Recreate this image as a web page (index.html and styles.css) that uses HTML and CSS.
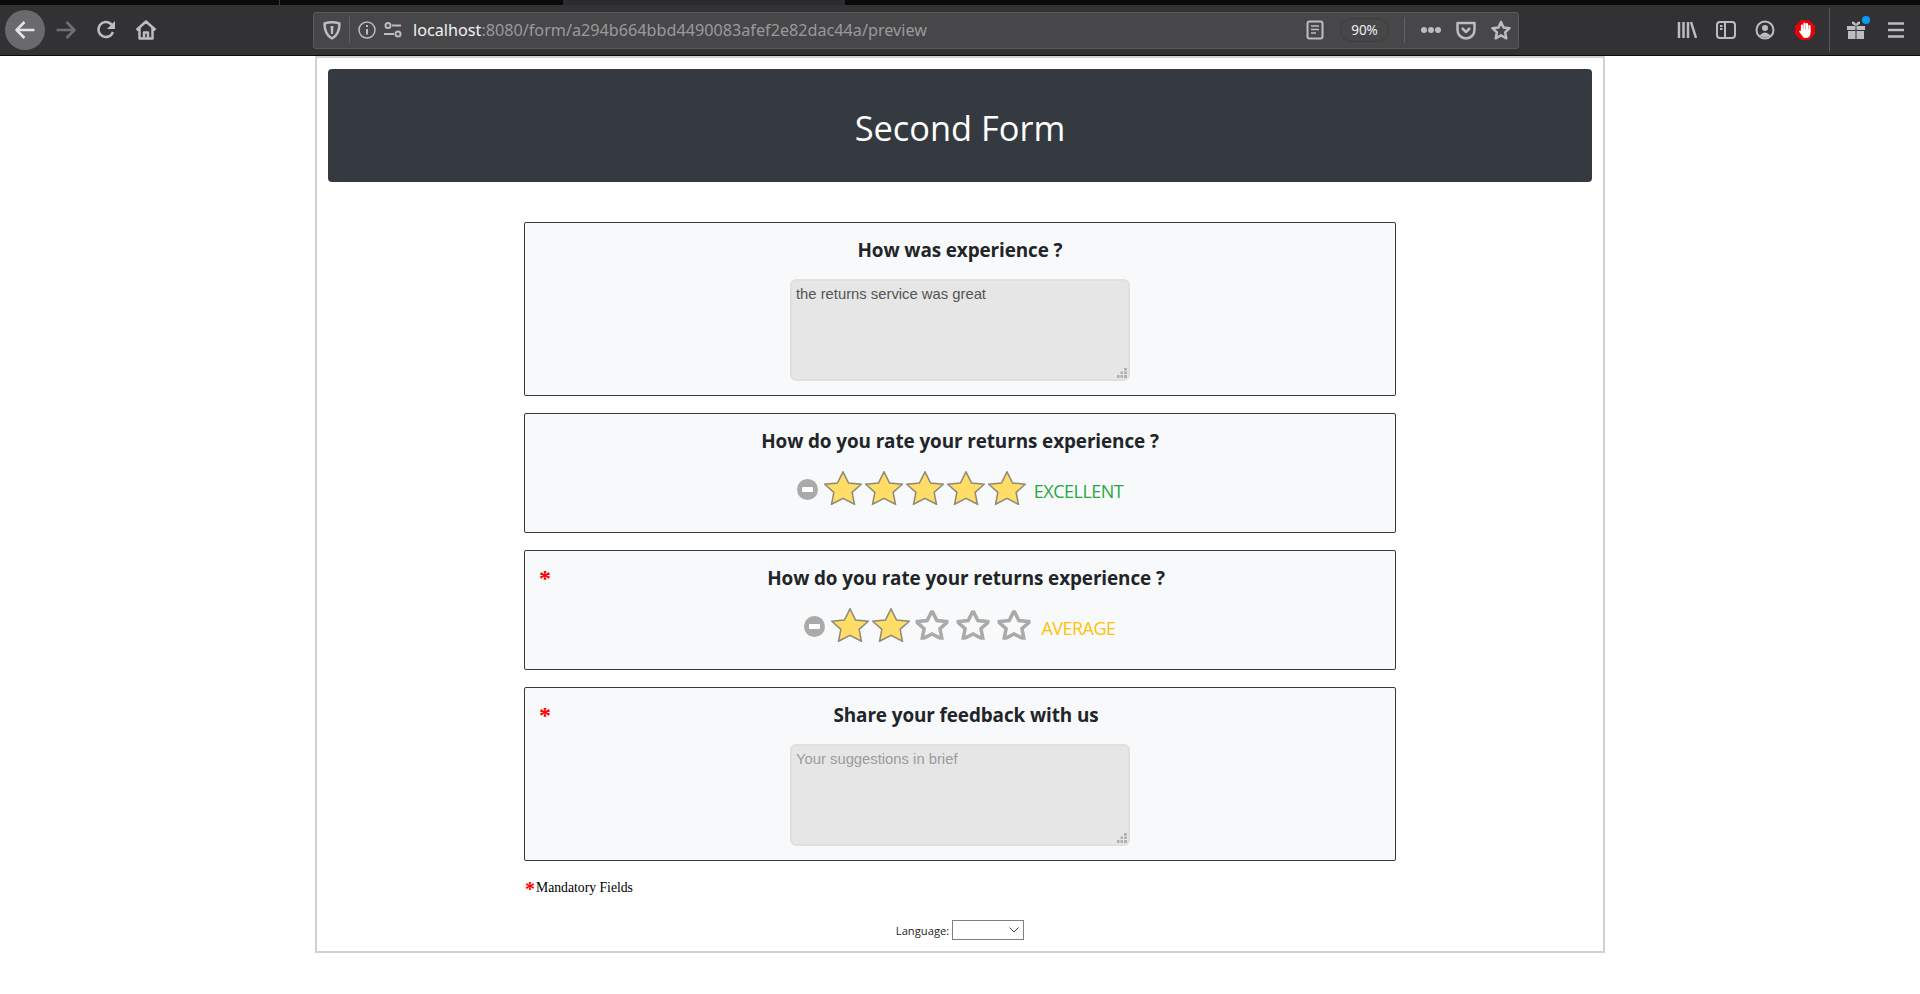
FILE: index.html
```html
<!DOCTYPE html>
<html lang="en">
<head>
<meta charset="utf-8">
<title>Second Form</title>
<link rel="stylesheet" href="styles.css">
</head>
<body>
<svg class="defs" width="0" height="0" aria-hidden="true">
  <symbol id="star" viewBox="0 0 37 33.5"><path d="M18.5.8L24 11.8 36.500 13 27.500 21 29.800 32.800 18.500 27 7.200 32.800 9.500 21 .5 13 13 11.800z"/></symbol>
  <symbol id="grip" viewBox="0 0 10 10"><path d="M7 0h3v2.500H7zM7 3.500h3V6H7zM3.500 3.500h2.500V6H3.500zM7 7h3v3H7zM3.500 7H6v3H3.500zM0 7h2.500v3H0z"/></symbol>
</svg>
<header class="browser">
  <div class="tabstrip"><span class="tab-a"></span><span class="tab-b"></span><span class="tab-c"></span></div>
  <div class="toolbar">
    <div class="nav">
      <span class="back"><svg width="22" height="22" viewBox="0 0 22 22"><path class="ln bold" d="M20.500 11H2M10.500 3L2.500 11l8 8"/></svg></span>
      <svg class="dim" width="22" height="22" viewBox="0 0 22 22"><path class="ln bold" d="M1.500 11H20M11.500 3l8 8-8 8"/></svg>
      <svg width="22" height="22" viewBox="0 0 22 22"><path class="ln bold" d="M18 13a7.500 7.500 0 1 1-2-8L18.500 7.500"/><path class="fillg" d="M20 2v8h-8z"/></svg>
      <svg width="22" height="22" viewBox="0 0 22 22"><path class="ln bold" d="M1.500 11L11 2.500l9.500 8.500M4.500 9v10.500h13V9M9 19.500v-6h4v6"/></svg>
    </div>
    <div class="urlbar">
      <svg width="18" height="20" viewBox="0 0 18 20"><path class="ln bold" d="M1.500 3.500Q9 1 16.500 3.500 16.500 14.500 9 18.500 1.500 14.500 1.500 3.500z"/><path class="fillg" d="M7.500 6h3l-.5 8H8z"/></svg>
      <span class="sep lead"></span>
      <svg class="info" width="18" height="18" viewBox="0 0 18 18"><circle class="ln thin" cx="9" cy="9" r="8"/><path class="ln" d="M9 8v5.500M9 4v2"/></svg>
      <svg width="20" height="18" viewBox="0 0 20 18"><circle class="ln" cx="5" cy="4.500" r="2.500"/><circle class="ln" cx="15" cy="13" r="2.500"/><path class="ln" d="M9 4.500h9M1 13h10"/></svg>
      <span class="url"><b>localhost</b>:8080/form/a294b664bbd4490083afef2e82dac44a/preview</span>
      <svg width="18" height="20" viewBox="0 0 18 20"><rect class="ln" x="1.500" y="1.500" width="15" height="17" rx="2"/><path class="ln thin" d="M5 6h8M5 9.500h8M5 13h5"/></svg>
      <span class="zoom">90%</span>
      <span class="sep gapped"></span>
      <span class="dots"><i></i><i></i><i></i></span>
      <svg width="20" height="20" viewBox="0 0 20 20"><path class="ln bold" d="M1.500 3h17v7a8.500 8.500 0 0 1-17 0zM6 8l4 4 4-4"/></svg>
      <svg class="fav" width="20" height="20" viewBox="0 0 20 20"><path class="ln bold" d="M10 2l2.500 5.500 6 .7-4.400 4.100 1.200 6L10 15.300l-5.300 3 1.200-6-4.400-4.100 6-.7z"/></svg>
    </div>
    <div class="tools">
      <svg width="20" height="20" viewBox="0 0 20 20"><path class="ln bold" d="M2 2v16M6.500 2v16M11 2v16M14 2l5 16"/></svg>
      <svg width="20" height="20" viewBox="0 0 20 20"><rect class="ln" x="1" y="2" width="18" height="16" rx="3"/><path class="ln" d="M9 2v16M4 6h2.500M4 9h2.500"/></svg>
      <svg width="20" height="20" viewBox="0 0 20 20"><circle class="ln" cx="10" cy="10" r="8.500"/><circle class="fillg" cx="10" cy="8" r="3"/><path class="fillg" d="M4.500 15.500Q10 9.500 15.500 15.500 10 19 4.500 15.500z"/></svg>
      <svg width="22" height="22" viewBox="0 0 22 22"><path class="abp" d="M7 1h8l6 6v8l-6 6H7l-6-6V7z"/><path class="fing" d="M8 11V6.500M10.500 11V4.500M13 11V5M15.500 12V7"/><path class="hand" d="M7 10.500h9.500V14q0 5-5 5-2.500 0-3.500-2.500L5 12.500q1-1.500 2-.5z"/></svg>
      <span class="sep full"></span>
      <span class="gift"><svg width="22" height="22" viewBox="0 0 22 22"><path class="fillg" d="M2 7h8.500v4H2zM11.500 7H20v4h-8.500zM3 12h7.500v8H3zM11.500 12H19v8h-7.500zM7 2.500q3.500 0 4 3 .5-3 4-3V5l-4 2-4-2z"/></svg><i class="dot"></i></span>
      <svg width="20" height="20" viewBox="0 0 20 20"><path class="ln bold" d="M2 3.500h16M2 10h16M2 16.500h16"/></svg>
    </div>
  </div>
</header>
<main class="frame">
  <div class="banner"><h1>Second Form</h1></div>
  <form class="questions">
    <section class="card tall">
      <h2>How was experience ?</h2>
      <div class="area filled">the returns service was great<svg class="grip" width="10" height="10"><use href="#grip"/></svg></div>
    </section>
    <section class="card">
      <h2>How do you rate your returns experience ?</h2>
      <div class="rating">
        <span class="clear"></span>
        <span class="stars">
          <svg class="on"><use href="#star"/></svg><svg class="on"><use href="#star"/></svg><svg class="on"><use href="#star"/></svg><svg class="on"><use href="#star"/></svg><svg class="on"><use href="#star"/></svg>
        </span>
        <span class="lbl good">EXCELLENT</span>
      </div>
    </section>
    <section class="card">
      <span class="req">*</span>
      <h2 class="marked">How do you rate your returns experience ?</h2>
      <div class="rating">
        <span class="clear"></span>
        <span class="stars">
          <svg class="on"><use href="#star"/></svg><svg class="on"><use href="#star"/></svg><svg class="off"><use href="#star"/></svg><svg class="off"><use href="#star"/></svg><svg class="off"><use href="#star"/></svg>
        </span>
        <span class="lbl avg">AVERAGE</span>
      </div>
    </section>
    <section class="card tall">
      <span class="req">*</span>
      <h2 class="marked">Share your feedback with us</h2>
      <div class="area hint">Your suggestions in brief<svg class="grip" width="10" height="10"><use href="#grip"/></svg></div>
    </section>
    <p class="mandatory"><span class="mark">*</span>Mandatory Fields</p>
    <div class="language">
      <span>Language:</span>
      <span class="select"><svg width="10" height="6" viewBox="0 0 10 6"><path d="M.5.500L5 5 9.500.500"/></svg></span>
    </div>
  </form>
</main>
</body>
</html>
```
FILE: styles.css
```css
* { box-sizing: border-box; }
html, body { margin: 0; padding: 0; background: #fff; }
body { height: 994px; overflow: hidden; font-family: "Open Sans", "Noto Sans", sans-serif; }
.defs { position: absolute; }

.browser { height: 56px; background: #323234; border-bottom: 1px solid #0c0c0d; }
.tabstrip { height: 5px; background: #0a0a0b; display: flex; }
.tab-a { width: 280px; border-right: 1px solid #3a3a3c; }
.tab-b { width: 283px; }
.tab-c { width: 282px; background: #2b2b2d; }
.toolbar { height: 50px; display: flex; align-items: center; padding: 0 14px 0 5px; }
.ln { fill: none; stroke: #bdbdbf; stroke-width: 2; stroke-linejoin: round; }
.ln.thin { stroke-width: 1.500; }
.ln.bold { stroke-width: 2.500; }
.fillg { fill: #bdbdbf; }
.nav { width: 308px; display: flex; align-items: center; gap: 18px; }
.nav .dim { opacity: .45; margin-left: -8px; }
.back { width: 40px; height: 40px; border-radius: 50%; background: #6a6a6c; display: flex; align-items: center; justify-content: center; }
.back .ln { stroke: #e4e4e6; }
.urlbar { width: 1206px; height: 37px; background: #474749; border: 1px solid #5a5a5c; border-radius: 3px; display: flex; align-items: center; padding: 0 7px 0 9px; gap: 7px; }
.sep { width: 1px; height: 26px; background: #5f6068; }
.sep.lead { margin-left: 1px; }
.info { margin-left: 1px; }
.sep.gapped { margin-left: 8px; }
.sep.full { height: 44px; margin: 0 -4px 0 -6px; background: #58585a; }
.url { flex: 1; font: 16.200px/1 "Noto Sans", sans-serif; color: #9a9a9c; margin-left: 3px; }
.url b { font-weight: 400; color: #f2f2f2; }
.zoom { width: 49px; height: 24px; margin-left: 9px; border: 1px solid #3c3c3e; border-radius: 12px; color: #f0f0f0; font: 13.500px/22px "Noto Sans", sans-serif; text-align: center; }
.dots { display: flex; gap: 1px; margin: 0 8px 0 9px; }
.dots i { width: 6px; height: 6px; border-radius: 50%; background: #bdbdbf; }
.fav { margin-left: 8px; }
.tools { flex: 1; display: flex; align-items: center; justify-content: flex-end; gap: 19px; }
.abp { fill: #e8000b; }
.hand { fill: #fff; }
.fing { fill: none; stroke: #fff; stroke-width: 2.200; stroke-linecap: round; }
.gift { position: relative; display: flex; }
.dot { position: absolute; top: -3px; right: -3px; width: 8px; height: 8px; border-radius: 50%; background: #0a9bf5; }

.frame { width: 1290px; height: 897px; margin: 0 0 0 315px; border: 2px solid #d0d0d0; padding: 11px 11px 0; }
.banner { height: 113px; background: #343a40; border-radius: 4px; display: flex; align-items: center; justify-content: center; }
h1 { margin: 0 0 -5px; font-size: 34.400px; font-weight: 400; line-height: 1.2; color: #fff; }
.questions { margin: 40px 0 0 196px; width: 872px; }
.card { position: relative; height: 120px; margin-bottom: 17px; background: #f8f9fa; border: 1px solid #343a40; border-radius: 2px; padding-top: 14px; }
.card.tall { height: 174px; }
h2 { margin: 0; font-size: 18.900px; font-weight: 700; line-height: 27px; color: #212529; text-align: center; letter-spacing: -.1px; }
h2.marked { padding-left: 12px; }
.req { position: absolute; left: 14px; top: 13px; color: #f00; font: 700 24px/1.2 "Liberation Serif", serif; }
.area { position: relative; width: 340px; height: 102px; margin: 15px auto 0; background: #e6e6e6; border: 2px solid #e0e0e0; border-radius: 6px; padding: 5px 4px; font: 14.800px/1.2 "Liberation Sans", sans-serif; color: #545454; }
.area.hint { color: #9b9b9b; }
.grip { position: absolute; right: 1px; bottom: 1px; fill: #b0b0b0; }
.rating { display: flex; align-items: center; justify-content: center; height: 48px; margin-top: 9px; }
.clear { position: relative; width: 21px; height: 21px; margin: 2px 6px 0 0; border-radius: 50%; background: #aaa; }
.clear::after { content: ""; position: absolute; left: 5px; top: 8px; width: 11px; height: 5px; border-radius: 1px; background: #fff; }
.stars { display: flex; gap: 3px; }
.stars svg { width: 38px; height: 34px; overflow: visible; }
.on { fill: #ffdd66; stroke: #8d8a7a; stroke-width: 1.500; }
.off { fill: #f8f9fa; stroke: #aaa; stroke-width: 4; }
.off use { transform: translate(2.500px, 2.200px) scale(.87); }
.lbl { font-size: 18px; margin: 5px 0 0 8px; letter-spacing: -.5px; }
.good { color: #28a745; }
.avg { color: #ffc107; }
.mandatory { margin: 19px 0 0 1px; font: 13.700px/1.2 "Liberation Serif", serif; color: #000; }
.mark { margin-right: 1px; color: #f00; font-weight: 700; font-size: 20px; line-height: 14px; vertical-align: -4px; }
.language { display: flex; align-items: center; justify-content: center; gap: 3px; margin-top: 24px; font-size: 11.200px; color: #212529; }
.select { width: 72px; height: 20px; border: 1px solid #808080; display: flex; align-items: center; justify-content: flex-end; padding-right: 4px; }
.select path { fill: none; stroke: #444; }
```
